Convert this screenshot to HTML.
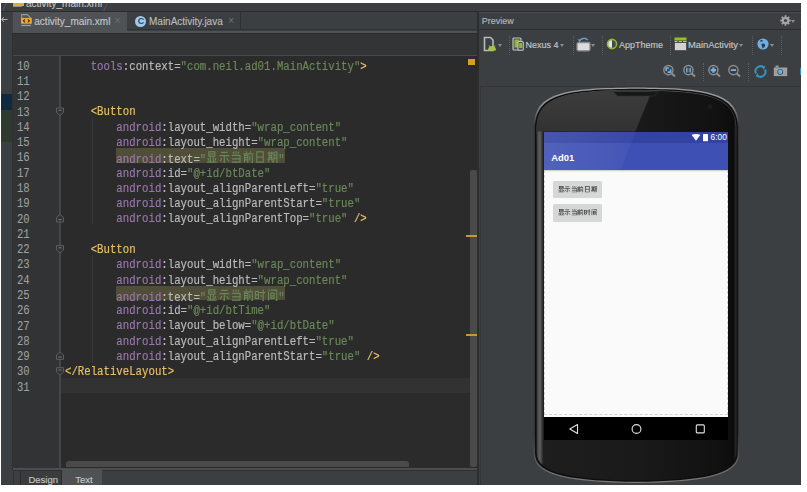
<!DOCTYPE html>
<html><head><meta charset="utf-8">
<style>
*{margin:0;padding:0;box-sizing:border-box}
html,body{width:807px;height:492px;overflow:hidden;background:#fff}
body{position:relative;font-family:"Liberation Sans",sans-serif}
.a{position:absolute}
#app{position:absolute;left:1px;top:3px;width:800px;height:482px;background:#3c3f41;overflow:hidden}
.ui{color:#bbbbbb;font-size:10px;white-space:nowrap;line-height:12px;-webkit-text-stroke:0.15px currentColor}
#code{position:absolute;left:64.7px;top:59.6px;font-family:"Liberation Mono",monospace;font-size:12px;-webkit-text-stroke:0.2px currentColor;white-space:pre;color:#bababa;transform-origin:0 0;transform:scaleX(0.8917)}
.ln{position:absolute;left:0;height:15.28px;line-height:15.28px}
.t{color:#e8bf6a}.n{color:#9876aa}.s{color:#6a8759}
#nums{position:absolute;left:16.9px;top:59.8px;font-family:"Liberation Mono",monospace;font-size:12.5px;-webkit-text-stroke:0.1px currentColor;white-space:pre;color:#9d9fa1;transform-origin:0 0;transform:scaleX(0.8467)}
.cj{display:inline-block;width:13.46px;height:12px;vertical-align:-0.2px;stroke-width:1.2}
.cjs .cj{stroke-width:1.3}
.sep{position:absolute;width:1px;border-left:1px dotted #5c5f61}
.arr{position:absolute;width:0;height:0;border-left:2.5px solid transparent;border-right:2.5px solid transparent;border-top:3px solid #8c8c8c}
</style></head><body>
<svg width="0" height="0" style="position:absolute">
<defs>
<symbol id="g-xian" viewBox="0 0 12 12"><g fill="none" stroke="currentColor"><rect x="2.6" y="0.8" width="6.8" height="4.4"/><path d="M2.6 3H9.4M4.4 6V10.8M7.6 6V10.8M1.4 7L2.8 9.6M10.6 7L9.2 9.6M0.6 11.2H11.4"/></g></symbol>
<symbol id="g-shi" viewBox="0 0 12 12"><g fill="none" stroke="currentColor"><path d="M2.4 1.4H9.6M0.6 4.6H11.4M6 4.6V11.4L4.8 10.8M3.4 7L1.2 10.2M8.6 7L10.8 10.2"/></g></symbol>
<symbol id="g-dang" viewBox="0 0 12 12"><g fill="none" stroke="currentColor"><path d="M2.6 0.6L3.8 2.8M6 0.2V3M9.4 0.6L8.2 2.8M1.4 4.4H10.6V11.2H1.4M1.8 7.9H10.6"/></g></symbol>
<symbol id="g-qian" viewBox="0 0 12 12"><g fill="none" stroke="currentColor"><path d="M3.2 0.2L4.2 1.8M8.8 0.2L7.8 1.8M0.4 2.8H11.6M1.6 11.6V4.4H5.4V11.4L4.6 11M1.6 6.6H5.4M1.6 8.8H5.4M7.6 5V9.4M10.4 4.2V11.4L9.4 11.1"/></g></symbol>
<symbol id="g-ri" viewBox="0 0 12 12"><g fill="none" stroke="currentColor"><rect x="2.4" y="0.8" width="7.2" height="10.4"/><path d="M2.4 6H9.6"/></g></symbol>
<symbol id="g-qi" viewBox="0 0 12 12"><g fill="none" stroke="currentColor"><path d="M2.2 0.4V8M5.2 0.4V8M0.6 2.2H6.8M2.2 4.3H5.2M2.2 6.3H5.2M0.4 8.2H7M2.4 9.4L0.8 11.2M5 9.4L6.6 11.2M7.8 1V7.8Q7.8 10.4 6.8 11.6M7.8 1H11V11.2L10.2 10.8M7.8 4.2H11M7.8 7.2H11"/></g></symbol>
<symbol id="g-shi2" viewBox="0 0 12 12"><g fill="none" stroke="currentColor"><rect x="0.8" y="2.4" width="3.4" height="7"/><path d="M0.8 5.9H4.2M5 3.6H11.6M9.6 0.4V11.4L8.4 10.8M6.8 6L7.8 8"/></g></symbol>
<symbol id="g-jian" viewBox="0 0 12 12"><g fill="none" stroke="currentColor"><path d="M1.6 0.2L2.6 1.8M1.6 2.6V11.6M4 1.2H10.8V11.4L9.8 11"/><rect x="4.2" y="4.2" width="3.6" height="5.2"/><path d="M4.2 6.8H7.8"/></g></symbol>
</defs></svg>

<div id="app"></div>

<!-- ===== top breadcrumb row ===== -->
<div class="a" style="left:1px;top:3px;width:800px;height:8px;background:#3c3f41;overflow:hidden">
  <div class="a" style="left:3px;top:-2px;width:1px;height:12px;background:#55585a;transform:skewX(-25deg)"></div>
  <div class="a" style="left:11.9px;top:0;width:10.8px;height:2.6px;background:#e5a83b"></div>
  <div class="a" style="left:12.3px;top:2.9px;width:8.8px;height:1.5px;background:#8e9092"></div>
  <div class="a ui" style="left:25px;top:-5.3px;font-size:10px;line-height:12px;color:#c0c0c0">activity_main.xml</div>
  <div class="a" style="left:104px;top:-2px;width:1px;height:12px;background:#55585a;transform:skewX(-25deg)"></div>
</div>
<div class="a" style="left:1px;top:11px;width:800px;height:1px;background:#2b2b2b"></div>

<!-- ===== left strip ===== -->
<div class="a" style="left:1px;top:12px;width:12px;height:473px;background:#3c3f41"></div>
<div class="a" style="left:1px;top:94px;width:11.5px;height:16px;background:#0d2a40"></div>
<div class="a" style="left:1px;top:110px;width:11.5px;height:31.5px;background:#2e3a2d"></div>
<div class="a" style="left:12.4px;top:33px;width:0.6px;height:437px;background:#2e3031"></div>

<!-- ===== tab row ===== -->
<svg class="a" style="left:1px;top:16px" width="8" height="7" viewBox="0 0 8 7"><path d="M0.6 3.5H6.4M2.8 1.2L0.7 3.5L2.8 5.8" fill="none" stroke="#b4b4b4" stroke-width="1"/></svg>
<div class="a" style="left:13px;top:12px;width:114px;height:18.5px;background:#4e5254"></div>
<!-- xml file icon -->
<svg class="a" style="left:20px;top:13px" width="13" height="14" viewBox="0 0 13 14">
  <path d="M1.7 5V1.6H7.2L10 4.2V5" fill="none" stroke="#9a9c9e" stroke-width="1.1"/>
  <rect x="1" y="4.9" width="10.8" height="5.8" fill="#eaa93a"/>
  <path d="M5 6.3L3.4 7.8L5 9.3M7.8 6.3L9.4 7.8L7.8 9.3" fill="none" stroke="#3b2e18" stroke-width="1.1"/>
  <rect x="1.3" y="11.8" width="9.6" height="1.3" fill="#9a9c9e"/>
</svg>
<div class="a ui" style="left:34.3px;top:15.8px;color:#c2c5c8">activity_main.xml</div>
<div class="a" style="left:114.5px;top:15.2px;color:#6f7375;font-size:10px;line-height:12px">&#215;</div>
<!-- inactive tab -->
<div class="a" style="left:127px;top:12px;width:114px;height:18px;background:#3c3f41;border-right:1px solid #2d2f30"></div>
<div class="a" style="left:135.2px;top:15.6px;width:11px;height:11px;border-radius:50%;background:#9dcdee"></div>
<div class="a" style="left:137.7px;top:15.7px;color:#2a4a66;font-size:9px;line-height:11px;font-weight:bold">C</div>
<div class="a ui" style="left:149px;top:15.8px;color:#bbbbbb">MainActivity.java</div>
<div class="a" style="left:228.3px;top:15.2px;color:#6f7375;font-size:10px;line-height:12px">&#215;</div>
<div class="a" style="left:127px;top:29.3px;width:350px;height:1.2px;background:#303234"></div>
<div class="a" style="left:13px;top:30.5px;width:464px;height:2.5px;background:#4e5254"></div>
<div class="a" style="left:13px;top:33px;width:464px;height:1px;background:#2b2b2b"></div>
<!-- empty bar -->
<div class="a" style="left:13px;top:34px;width:464px;height:21px;background:#323436"></div>
<div class="a" style="left:13px;top:55px;width:464px;height:1px;background:#47494b"></div>

<!-- ===== editor ===== -->
<div class="a" style="left:13px;top:56px;width:46px;height:412px;background:#313335"></div>
<div class="a" style="left:59px;top:56px;width:2px;height:412px;background:#444648"></div>
<div class="a" style="left:61px;top:56px;width:416px;height:412px;background:#2b2b2b"></div>
<div class="a" style="left:61px;top:378px;width:409px;height:14.5px;background:#323232"></div>
<!-- indent guides -->
<div class="a" style="left:92px;top:117px;width:1px;height:107px;background:#383838"></div>
<div class="a" style="left:92px;top:255px;width:1px;height:107px;background:#383838"></div>
<!-- highlight -->
<div class="a" style="left:116px;top:148px;width:168.7px;height:14.8px;background:#504e39"></div>
<div class="a" style="left:116px;top:285.5px;width:168.7px;height:14.8px;background:#504e39"></div>
<!-- scrollbars -->
<div class="a" style="left:470.3px;top:170px;width:6.7px;height:296.5px;background:#4a4a4a;border-radius:2px"></div>
<div class="a" style="left:66px;top:461px;width:343.3px;height:6px;background:#4a4a4a;border-radius:3px 3px 0 0"></div>
<!-- markers -->
<div class="a" style="left:467px;top:58px;width:8.5px;height:8px;background:#d4a21f;border:1px solid #2a2a2a"></div>
<div class="a" style="left:465.6px;top:234.8px;width:11.4px;height:1.8px;background:#c59a2c"></div>
<div class="a" style="left:465.6px;top:334.2px;width:11.4px;height:1.8px;background:#c59a2c"></div>

<div id="nums"><div class="ln" style="top:0">10</div><div class="ln" style="top:15.28px">11</div><div class="ln" style="top:30.56px">12</div><div class="ln" style="top:45.84px">13</div><div class="ln" style="top:61.12px">14</div><div class="ln" style="top:76.4px">15</div><div class="ln" style="top:91.68px">16</div><div class="ln" style="top:106.96px">17</div><div class="ln" style="top:122.24px">18</div><div class="ln" style="top:137.52px">19</div><div class="ln" style="top:152.8px">20</div><div class="ln" style="top:168.08px">21</div><div class="ln" style="top:183.36px">22</div><div class="ln" style="top:198.64px">23</div><div class="ln" style="top:213.92px">24</div><div class="ln" style="top:229.2px">25</div><div class="ln" style="top:244.48px">26</div><div class="ln" style="top:259.76px">27</div><div class="ln" style="top:275.04px">28</div><div class="ln" style="top:290.32px">29</div><div class="ln" style="top:305.6px">30</div><div class="ln" style="top:320.88px">31</div></div>

<div id="code"><div class="ln" style="top:0">    <span class="n">tools</span>:context=<span class="s">"com.neil.ad01.MainActivity"</span><span class="t">&gt;</span></div><div class="ln" style="top:45.84px">    <span class="t">&lt;Button</span></div><div class="ln" style="top:61.12px">        <span class="n">android</span>:layout_width=<span class="s">"wrap_content"</span></div><div class="ln" style="top:76.4px">        <span class="n">android</span>:layout_height=<span class="s">"wrap_content"</span></div><div class="ln" style="top:91.68px">        <span class="n">android</span>:text=<span class="s">"<svg class="cj"><use href="#g-xian"/></svg><svg class="cj"><use href="#g-shi"/></svg><svg class="cj"><use href="#g-dang"/></svg><svg class="cj"><use href="#g-qian"/></svg><svg class="cj"><use href="#g-ri"/></svg><svg class="cj"><use href="#g-qi"/></svg>"</span></div><div class="ln" style="top:106.96px">        <span class="n">android</span>:id=<span class="s">"@+id/btDate"</span></div><div class="ln" style="top:122.24px">        <span class="n">android</span>:layout_alignParentLeft=<span class="s">"true"</span></div><div class="ln" style="top:137.52px">        <span class="n">android</span>:layout_alignParentStart=<span class="s">"true"</span></div><div class="ln" style="top:152.8px">        <span class="n">android</span>:layout_alignParentTop=<span class="s">"true"</span> <span class="t">/&gt;</span></div><div class="ln" style="top:183.36px">    <span class="t">&lt;Button</span></div><div class="ln" style="top:198.64px">        <span class="n">android</span>:layout_width=<span class="s">"wrap_content"</span></div><div class="ln" style="top:213.92px">        <span class="n">android</span>:layout_height=<span class="s">"wrap_content"</span></div><div class="ln" style="top:229.2px">        <span class="n">android</span>:text=<span class="s">"<svg class="cj"><use href="#g-xian"/></svg><svg class="cj"><use href="#g-shi"/></svg><svg class="cj"><use href="#g-dang"/></svg><svg class="cj"><use href="#g-qian"/></svg><svg class="cj"><use href="#g-shi2"/></svg><svg class="cj"><use href="#g-jian"/></svg>"</span></div><div class="ln" style="top:244.48px">        <span class="n">android</span>:id=<span class="s">"@+id/btTime"</span></div><div class="ln" style="top:259.76px">        <span class="n">android</span>:layout_below=<span class="s">"@+id/btDate"</span></div><div class="ln" style="top:275.04px">        <span class="n">android</span>:layout_alignParentLeft=<span class="s">"true"</span></div><div class="ln" style="top:290.32px">        <span class="n">android</span>:layout_alignParentStart=<span class="s">"true"</span> <span class="t">/&gt;</span></div><div class="ln" style="top:305.6px"><span class="t">&lt;/RelativeLayout&gt;</span></div></div>

<!-- fold markers -->
<svg class="a" style="left:54px;top:56px" width="12" height="412" viewBox="0 0 12 412">
  <g fill="#313335" stroke="#5a5c5e" stroke-width="1">
    <path d="M2.5 52.0H9.5V56.5L6 59.5L2.5 56.5Z"/><path d="M2.5 161.4L6 158.4L9.5 161.4V165.9H2.5Z"/><path d="M2.5 189.5H9.5V194.0L6 197.0L2.5 194.0Z"/><path d="M2.5 298.9L6 295.9L9.5 298.9V303.4H2.5Z"/><path d="M2.5 311.7H9.5V316.2L6 319.2L2.5 316.2Z"/>
  </g>
  <g stroke="#7a7c7e" stroke-width="1"><path d="M4.5 54.3H7.5M4.5 163.6H7.5M4.5 191.8H7.5M4.5 301.1H7.5M4.5 314.0H7.5"/></g>
</svg>

<!-- ===== bottom design/text bar ===== -->
<div class="a" style="left:13px;top:468px;width:464px;height:2.4px;background:#4b4e50"></div>
<div class="a" style="left:13px;top:470.4px;width:464px;height:15px;background:#3c3f41"></div>
<div class="a" style="left:13px;top:470.3px;width:464px;height:1px;background:#2f3133"></div>
<div class="a" style="left:20px;top:471px;width:42px;height:14.5px;background:#393b3d;border-left:1px solid #2a2c2d;border-right:1px solid #2a2c2d"></div>
<div class="a" style="left:12.5px;top:470.3px;width:1px;height:15px;background:#2f3133"></div>
<div class="a" style="left:62px;top:468.5px;width:40.3px;height:17px;background:#4e5254"></div>
<div class="a ui" style="left:28.4px;top:474px;font-size:9.5px;color:#c4c6c8">Design</div>
<div class="a ui" style="left:75.2px;top:474px;font-size:9.5px;color:#c4c6c8">Text</div>

<!-- ===== divider ===== -->
<div class="a" style="left:477px;top:12px;width:1.5px;height:473px;background:#2b2d2e"></div>

<!-- ===== preview panel ===== -->
<div class="a" style="left:478.5px;top:12px;width:322.5px;height:1px;background:#4a4d4f"></div>
<div class="a ui" style="left:481.8px;top:15.3px;font-size:9px;color:#b4b6b8">Preview</div>
<div class="a" style="left:478.5px;top:29.2px;width:322.5px;height:1.2px;background:#2b2d2e"></div>
<!-- gear -->
<svg class="a" style="left:779.5px;top:15.2px" width="11" height="11" viewBox="0 0 11 11">
  <g fill="#a6a6a6"><circle cx="5.5" cy="5.5" r="3.6"/><g stroke="#a6a6a6" stroke-width="1.8"><path d="M5.5 0.3V10.7M0.3 5.5H10.7M1.8 1.8L9.2 9.2M9.2 1.8L1.8 9.2"/></g></g>
  <circle cx="5.5" cy="5.5" r="1.6" fill="#3c3f41"/>
</svg>
<div class="arr" style="left:791.2px;top:20px"></div>

<!-- toolbar row 1 -->
<svg class="a" style="left:483px;top:36px" width="15" height="16" viewBox="0 0 15 16">
  <path d="M1.5 1.5H7.5L10 4V14.5H1.5Z" fill="none" stroke="#b8b8b8" stroke-width="1.6"/>
  <path d="M5 14.5Q5 10 9 10Q13 10 13 14.5Z" fill="#a4c639"/>
  <path d="M6 9.5L7 11M12 9.5L11 11" stroke="#a4c639" stroke-width="1"/>
</svg>
<div class="arr" style="left:497.7px;top:44px"></div>
<div class="sep" style="left:508.5px;top:36px;height:19px"></div>
<svg class="a" style="left:511.5px;top:37px" width="12" height="14" viewBox="0 0 12 14">
  <rect x="1" y="1" width="8" height="12" rx="1" fill="#4a4d4f" stroke="#c0c0c0" stroke-width="1.2"/>
  <rect x="2.5" y="2.5" width="5" height="8" fill="#8fb82c"/>
  <rect x="6" y="4.5" width="5.3" height="8.7" rx="1" fill="#4a4d4f" stroke="#c0c0c0" stroke-width="1.1"/>
  <rect x="7.2" y="6" width="3" height="5" fill="#8fb82c"/>
</svg>
<div class="a ui" style="left:525.5px;top:38.5px;font-size:9px;color:#c4c6c8">Nexus 4</div>
<div class="arr" style="left:559.8px;top:44px"></div>
<div class="sep" style="left:572.7px;top:36px;height:19px"></div>
<svg class="a" style="left:575.5px;top:36px" width="15" height="16" viewBox="0 0 15 16">
  <path d="M3 5Q7.5 0 12 4" fill="none" stroke="#5da0d6" stroke-width="1.3"/>
  <path d="M1.5 3.2L3.8 6.2L5 3.5Z" fill="#5da0d6"/>
  <rect x="1" y="6.5" width="13" height="8.3" rx="1.5" fill="#dcdcdc" stroke="#8a8a8a" stroke-width="1.3"/>
</svg>
<div class="arr" style="left:590.8px;top:44px"></div>
<div class="sep" style="left:601.6px;top:36px;height:19px"></div>
<svg class="a" style="left:605.8px;top:38px" width="12" height="12" viewBox="0 0 12 12">
  <circle cx="6" cy="6" r="4.6" fill="#46494b" stroke="#8dbb2a" stroke-width="1.6"/>
  <path d="M6 2.2A3.8 3.8 0 0 0 6 9.8Z" fill="#e6e6e6"/>
</svg>
<div class="a ui" style="left:619px;top:38.5px;font-size:9px;color:#c4c6c8">AppTheme</div>
<div class="sep" style="left:670.3px;top:36px;height:19px"></div>
<svg class="a" style="left:674px;top:37px" width="13" height="14" viewBox="0 0 13 14">
  <rect x="0.5" y="0.5" width="12" height="3" fill="#95c11f"/>
  <path d="M0.5 4.6H3.5M4.8 4.6H7.8M9 4.6H12.5" stroke="#bdbdbd" stroke-width="1.3"/>
  <rect x="0.5" y="5.6" width="12" height="8" fill="#d2d2d2" stroke="#2e3032" stroke-width="0.6"/>
</svg>
<div class="a ui" style="left:688px;top:38.5px;font-size:9.4px;color:#c4c6c8">MainActivity</div>
<div class="arr" style="left:739px;top:44px"></div>
<div class="sep" style="left:752.2px;top:36px;height:19px"></div>
<svg class="a" style="left:756.5px;top:38.3px" width="12" height="12" viewBox="0 0 12 12">
  <circle cx="6" cy="6" r="5.6" fill="#6daee3"/>
  <path d="M3 2.5Q5 1.5 6 3Q4.5 4 3.5 3.8Z M4.5 6Q6.5 5 8 6.5Q8.5 8.5 7 9.2Q6 11 5.2 10Q5.5 8 4.5 7Z" fill="#2b3a46"/>
</svg>
<div class="arr" style="left:770.3px;top:44px"></div>
<div class="sep" style="left:781.2px;top:36px;height:19px"></div>

<!-- toolbar row 2 -->
<svg class="a" style="left:661px;top:63px" width="16" height="16" viewBox="0 0 16 16">
  <circle cx="7.4" cy="7.1" r="4.6" fill="#3c3f41" stroke="#8e8e8e" stroke-width="1.4"/>
  <path d="M10.5 10.3L14 13.6" stroke="#8e8e8e" stroke-width="2"/>
  <path d="M5.2 8V5H8.2M9.6 6.2V9.2H6.6" fill="none" stroke="#6eb4ec" stroke-width="1.7"/>
</svg>
<svg class="a" style="left:681px;top:63px" width="16" height="16" viewBox="0 0 16 16">
  <circle cx="7.4" cy="7.1" r="4.6" fill="#3c3f41" stroke="#8e8e8e" stroke-width="1.4"/>
  <path d="M10.5 10.3L14 13.6" stroke="#8e8e8e" stroke-width="2"/>
  <path d="M5.8 4.8V9.4M9.2 4.8V9.4" stroke="#6eb4ec" stroke-width="1.4"/><path d="M7.5 5.8V6.4M7.5 7.8V8.4" stroke="#6eb4ec" stroke-width="0.8"/>
</svg>
<div class="sep" style="left:703.2px;top:63px;height:18px"></div>
<svg class="a" style="left:706px;top:63px" width="16" height="16" viewBox="0 0 16 16">
  <circle cx="7.4" cy="7.1" r="4.6" fill="#3c3f41" stroke="#8e8e8e" stroke-width="1.4"/>
  <path d="M10.5 10.3L14 13.6" stroke="#8e8e8e" stroke-width="2"/>
  <path d="M4.7 7.1H10.1M7.4 4.4V9.8" stroke="#6eb4ec" stroke-width="2.3"/>
</svg>
<svg class="a" style="left:726.3px;top:63.3px" width="16" height="16" viewBox="0 0 16 16">
  <circle cx="7.4" cy="7.1" r="4.6" fill="#3c3f41" stroke="#8e8e8e" stroke-width="1.4"/>
  <path d="M10.5 10.3L14 13.6" stroke="#8e8e8e" stroke-width="2"/>
  <path d="M4.8 7.1H10" stroke="#6eb4ec" stroke-width="1.8"/>
</svg>
<div class="sep" style="left:748px;top:62.7px;height:18px"></div>
<svg class="a" style="left:753.5px;top:64.8px" width="13" height="13" viewBox="0 0 13 13">
  <path d="M9.5 2.3A5 5 0 0 0 2 8.5M3.5 10.7A5 5 0 0 0 11 4.5" fill="none" stroke="#3592c4" stroke-width="2"/>
  <path d="M8 0.5L11.5 1.5L9.5 5Z M5 12.5L1.5 11.5L3.5 8Z" fill="#3592c4"/>
</svg>
<svg class="a" style="left:773px;top:64.5px" width="15" height="12" viewBox="0 0 15 12">
  <rect x="2.5" y="0.5" width="3" height="2" fill="#9a9a9a"/>
  <rect x="0.8" y="2.5" width="13.4" height="8.6" fill="#a0a0a0"/>
  <circle cx="7.2" cy="6.8" r="2.9" fill="#3c3f41"/>
  <circle cx="7.2" cy="6.8" r="2.2" fill="#64b6ea"/>
</svg>
<div class="a" style="left:799.5px;top:67.5px;width:2px;height:7px;background:#3592c4"></div>

<!-- canvas border -->
<div class="a" style="left:480.3px;top:85.5px;width:321px;height:1px;background:#323436"></div>
<div class="a" style="left:480.3px;top:85.5px;width:1px;height:400px;background:#323436"></div>

<!-- ===== phone ===== -->
<svg class="a" style="left:530px;top:84px" width="215" height="401" viewBox="0 0 215 401">
  <defs>
    <linearGradient id="pb" gradientUnits="userSpaceOnUse" x1="3.8" x2="209" y1="0" y2="0">
      <stop offset="0" stop-color="#262626"/><stop offset="0.015" stop-color="#2c2c2c"/>
      <stop offset="0.02" stop-color="#4e4e4e"/><stop offset="0.03" stop-color="#5e5e5e"/><stop offset="0.04" stop-color="#3a3a3a"/><stop offset="0.047" stop-color="#1e1e1e"/>
      <stop offset="0.5" stop-color="#1a1a1a"/><stop offset="0.9" stop-color="#111"/><stop offset="0.975" stop-color="#0c0c0c"/><stop offset="0.99" stop-color="#3a3a3a"/><stop offset="1" stop-color="#333"/>
    </linearGradient>
    <linearGradient id="pr" gradientUnits="userSpaceOnUse" x1="0" x2="0" y1="3" y2="399">
      <stop offset="0" stop-color="#a0a0a0"/><stop offset="0.05" stop-color="#8a8a8a"/><stop offset="0.1" stop-color="#333"/>
      <stop offset="0.88" stop-color="#333"/><stop offset="0.95" stop-color="#606060"/><stop offset="1" stop-color="#7a7a7a"/>
    </linearGradient>
    <linearGradient id="gl" x1="0" x2="0" y1="0" y2="1">
      <stop offset="0" stop-color="#3e3e3e"/><stop offset="1" stop-color="#323232"/>
    </linearGradient>
    <clipPath id="pc"><path d="M6.40 46.10C6.40 10.60 37.40 6.60 106.40 6.10C175.40 6.60 206.40 10.60 206.40 46.10V368.18C206.40 390.40 166.40 395.40 106.40 396.40C46.40 395.40 6.40 390.40 6.40 368.18Z"/></clipPath>
  </defs>
  <path d="M3.80 43.50C3.80 8.00 34.80 4.00 106.40 3.50C178.00 4.00 209.00 8.00 209.00 43.50V370.00C209.00 393.00 169.00 398.00 106.40 399.00C43.80 398.00 3.80 393.00 3.80 370.00Z" fill="url(#pr)"/>
  <path d="M5.00 44.70C5.00 9.20 36.00 5.20 106.40 4.70C176.80 5.20 207.80 9.20 207.80 44.70V369.16C207.80 391.80 167.80 396.80 106.40 397.80C45.00 396.80 5.00 391.80 5.00 369.16Z" fill="#0e0e0e"/>
  <path d="M6.40 46.10C6.40 10.60 37.40 6.60 106.40 6.10C175.40 6.60 206.40 10.60 206.40 46.10V368.18C206.40 390.40 166.40 395.40 106.40 396.40C46.40 395.40 6.40 390.40 6.40 368.18Z" fill="url(#pb)"/>
  <linearGradient id="ir" gradientUnits="userSpaceOnUse" x1="0" x2="0" y1="3" y2="60"><stop offset="0" stop-color="#6a6a6a"/><stop offset="0.5" stop-color="#4a4a4a"/><stop offset="1" stop-color="#4a4a4a" stop-opacity="0"/></linearGradient>
  <path d="M6.40 46.10C6.40 10.60 37.40 6.60 106.40 6.10C175.40 6.60 206.40 10.60 206.40 46.10V368.18C206.40 390.40 166.40 395.40 106.40 396.40C46.40 395.40 6.40 390.40 6.40 368.18Z" fill="none" stroke="url(#ir)" stroke-width="1" clip-path="url(#pc)"/>
  <g clip-path="url(#pc)">
    <path d="M0 0H124.8L105.3 47.5H0Z" fill="url(#gl)"/>
  </g>
  <path d="M83.5 7.8H128L124 12H87.5Z" fill="#161616" stroke="#333" stroke-width="0.6"/>
  <circle cx="179.8" cy="22.6" r="2.6" fill="#181a24"/>
</svg>
<!-- screen -->
<div class="a" style="left:543.5px;top:131.5px;width:184.5px;height:11px;background:#3343a3"></div>
<div class="a" style="left:543.5px;top:142.5px;width:184.5px;height:27.2px;background:#3e50b4"></div>
<svg class="a" style="left:543.5px;top:131.5px" width="185" height="39" viewBox="0 0 185 39"><defs><linearGradient id="rf" x1="0" x2="1" y1="0" y2="0"><stop offset="0" stop-color="#fff" stop-opacity="0.1"/><stop offset="1" stop-color="#fff" stop-opacity="0.03"/></linearGradient></defs><path d="M0 0H91.8L76 38.2H0Z" fill="url(#rf)"/></svg>
<div class="a" style="left:543.5px;top:169.7px;width:184.5px;height:247px;background:#fafafa"></div>
<div class="a" style="left:543.5px;top:169.7px;width:184.5px;height:2.5px;background:linear-gradient(#c8c8c8,#fafafa)"></div>
<div class="a" style="left:543.6px;top:169.7px;width:184.2px;height:245.6px;border:1px dashed #d2d2d2;border-top:none"></div>
<div class="a" style="left:543.5px;top:416.5px;width:184.5px;height:23px;background:#000"></div>
<div class="a" style="left:551.3px;top:151.6px;color:#fff;font-weight:bold;font-size:9.4px;line-height:11px">Ad01</div>
<svg class="a" style="left:691px;top:133.5px" width="18" height="8" viewBox="0 0 18 8">
  <path d="M0.6 0.8Q5 -0.6 9.4 0.8L5 6.8Z" fill="#fff"/>
  <rect x="12" y="0" width="5" height="7.2" rx="0.5" fill="#fff"/>
  <rect x="13.5" y="-0.8" width="2" height="1" fill="#fff"/>
</svg>
<div class="a" style="left:710.6px;top:133px;color:#fff;font-size:8.4px;line-height:9px">6:00</div>

<!-- buttons -->
<div class="a" style="left:553.2px;top:180.8px;width:48.4px;height:17.7px;background:#d6d7d7;border-radius:1.5px"></div>
<div class="a" style="left:553.2px;top:204px;width:48.4px;height:17.7px;background:#d6d7d7;border-radius:1.5px"></div>
<div class="a cjs" style="left:557.6px;top:186px;color:#3c3c3c;white-space:nowrap;line-height:0">
<svg class="cj" style="width:6.6px;height:6.6px"><use href="#g-xian"/></svg><svg class="cj" style="width:6.6px;height:6.6px"><use href="#g-shi"/></svg><svg class="cj" style="width:6.6px;height:6.6px"><use href="#g-dang"/></svg><svg class="cj" style="width:6.6px;height:6.6px"><use href="#g-qian"/></svg><svg class="cj" style="width:6.6px;height:6.6px"><use href="#g-ri"/></svg><svg class="cj" style="width:6.6px;height:6.6px"><use href="#g-qi"/></svg></div>
<div class="a cjs" style="left:557.6px;top:209.3px;color:#3c3c3c;white-space:nowrap;line-height:0">
<svg class="cj" style="width:6.6px;height:6.6px"><use href="#g-xian"/></svg><svg class="cj" style="width:6.6px;height:6.6px"><use href="#g-shi"/></svg><svg class="cj" style="width:6.6px;height:6.6px"><use href="#g-dang"/></svg><svg class="cj" style="width:6.6px;height:6.6px"><use href="#g-qian"/></svg><svg class="cj" style="width:6.6px;height:6.6px"><use href="#g-shi2"/></svg><svg class="cj" style="width:6.6px;height:6.6px"><use href="#g-jian"/></svg></div>

<!-- nav bar -->
<svg class="a" style="left:543.5px;top:416.5px" width="185" height="23" viewBox="0 0 185 23">
  <path d="M33.5 7.6V16.4L25.8 12Z" fill="none" stroke="#e0e0e0" stroke-width="1.1" stroke-linejoin="round"/>
  <circle cx="92.5" cy="12" r="4.4" fill="none" stroke="#e0e0e0" stroke-width="1.1"/>
  <rect x="152.3" y="7.9" width="8" height="8" rx="1" fill="none" stroke="#e0e0e0" stroke-width="1.1"/>
</svg>

<!-- white frame (outside app area) -->
<div class="a" style="left:0;top:0;width:807px;height:3px;background:#fff"></div>
<div class="a" style="left:0;top:0;width:1px;height:492px;background:#fff"></div>
<div class="a" style="left:801px;top:0;width:6px;height:492px;background:#fff"></div>
<div class="a" style="left:0;top:485px;width:807px;height:7px;background:#fff"></div>
<script>
(function(){try{
var p=document.createElement('span');
p.style.cssText="position:absolute;left:0;top:0;visibility:hidden;font-family:'Liberation Mono',monospace;font-size:12px;white-space:pre";
p.textContent=new Array(101).join('m');document.body.appendChild(p);
var w=p.getBoundingClientRect().width/100;document.body.removeChild(p);
if(w>5&&w<9){var sx=6.42/w;
document.getElementById('code').style.transform='scaleX('+sx+')';
document.getElementById('nums').style.transform='scaleX('+(sx*12/12.5*6.35/6.42)+')';
var c=document.querySelectorAll('#code .cj');for(var i=0;i<c.length;i++){c[i].style.width=(12/sx)+'px';}}
}catch(e){}})();
</script>
</body></html>
